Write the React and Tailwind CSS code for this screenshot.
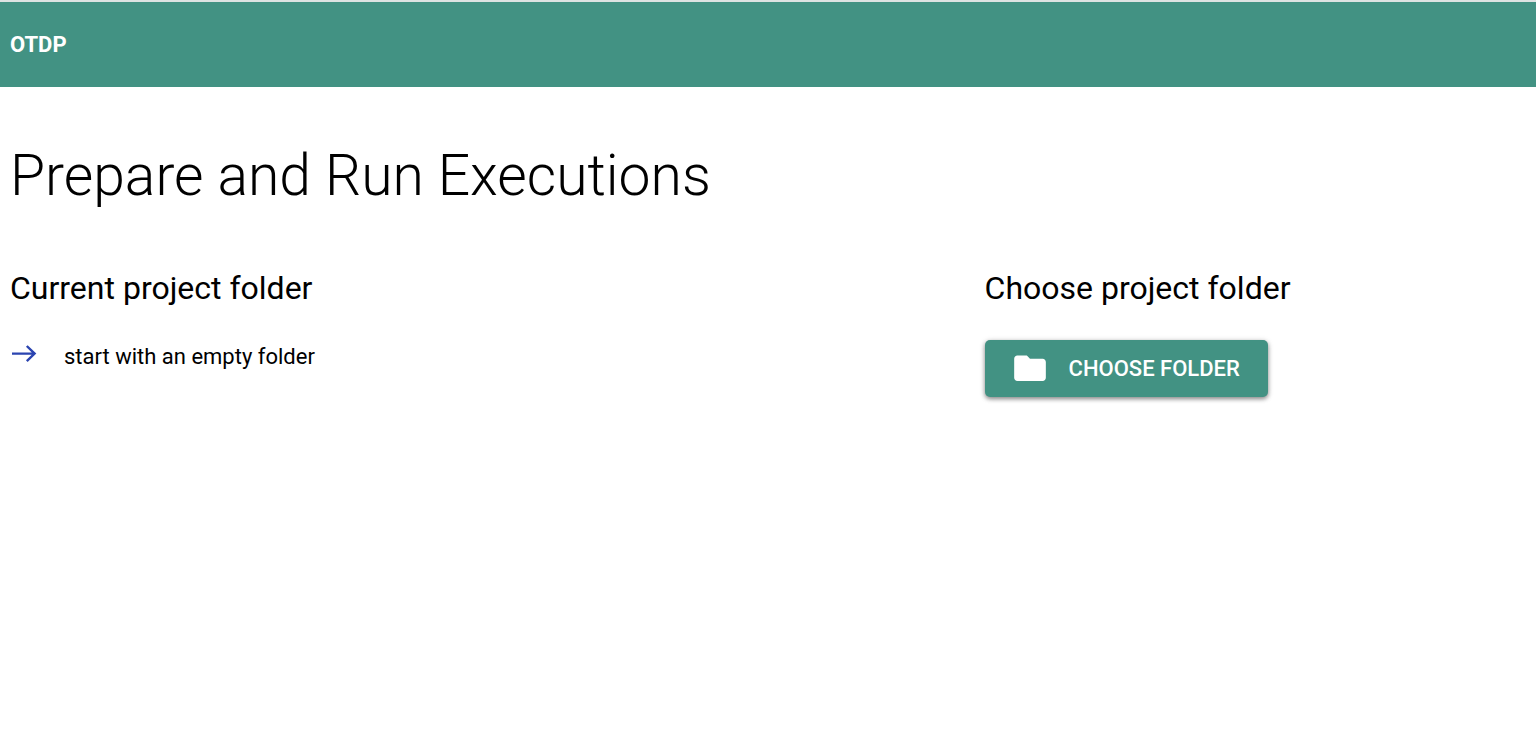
import React from "react";

function ArrowIcon() {
  return (
    <svg viewBox="0 0 28 28" className="size-7 shrink-0" fill="none" stroke="#2b44b0" strokeWidth="2.4" aria-hidden="true">
      <path d="M2 12.6H25M16.8 5L24.6 12.6L16.8 20.2" />
    </svg>
  );
}

function FolderIcon() {
  return (
    <svg viewBox="0 0 24 24" className="size-[38px] shrink-0" fill="currentColor" aria-hidden="true">
      <path d="M10 3.5H4c-1.1 0-1.99.9-1.99 2L2 17.5c0 1.1.9 2 2 2h16c1.1 0 2-.9 2-2V7.5c0-1.1-.9-2-2-2h-8l-2-2z" />
    </svg>
  );
}

export default function App() {
  return (
    <div className="min-h-screen bg-white font-['Roboto',sans-serif] text-black">
      <header className="border-t-2 border-[#dde3e2] bg-[#429283] px-2.5 py-[26px]">
        <p className="text-[22px] leading-[33px] font-bold text-white">OTDP</p>
      </header>
      <main className="px-2.5 pt-12">
        <h1 className="text-[57px] leading-[82px] font-light">Prepare and Run Executions</h1>
        <div className="mt-[46px] grid grid-cols-[9fr_5fr]">
          <section>
            <h2 className="text-[32px] leading-[50px]">Current project folder</h2>
            <p className="mt-7 flex gap-[26px] text-[22px] leading-8">
              <ArrowIcon />
              start with an empty folder
            </p>
          </section>
          <section>
            <h2 className="text-[32px] leading-[50px]">Choose project folder</h2>
            <button
              type="button"
              className="mt-[27px] flex h-[57px] items-center gap-5 rounded-[5px] bg-[#429283] pr-7 pl-[26px] text-[22px] font-medium text-white shadow-[0_2px_4px_rgba(0,0,0,0.4),0_1px_6px_rgba(0,0,0,0.15)]"
            >
              <FolderIcon />
              CHOOSE FOLDER
            </button>
          </section>
        </div>
      </main>
    </div>
  );
}
